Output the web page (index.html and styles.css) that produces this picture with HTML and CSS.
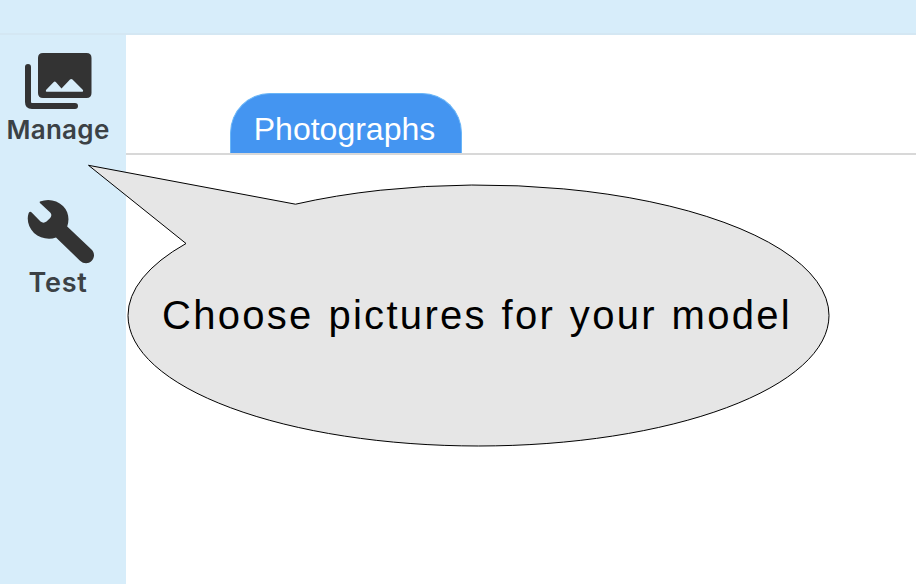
FILE: index.html
```html
<!DOCTYPE html>
<html lang="en">
<head>
<meta charset="utf-8">
<title>Manage pictures</title>
<link rel="stylesheet" href="styles.css">
</head>
<body>
<header class="topbar"></header>
<div class="layout">
  <nav class="sidebar">
    <a class="nav-item manage">
      <svg width="70" height="58" viewBox="23 51 70 58">
        <path class="ink" fill-rule="evenodd" d="M43 53H86.500Q91.500 53 91.500 58V93Q91.500 98 86.500 98H43Q38 98 38 93V58Q38 53 43 53ZM46.500 91.800H82.500Q83.500 91.400 83 90L72.500 79.500Q71.200 78.300 70 79.500L61.500 88.500L56 82.200Q54.800 81 53.500 82.200L46 90Q45.400 91.400 46.500 91.800Z"/>
        <path class="rail" d="M28 67V102Q28 106 32 106H75"/>
      </svg>
      <span class="label">Manage</span>
    </a>
    <a class="nav-item test">
      <svg width="70" height="66" viewBox="26 199 70 66">
        <path class="ink" d="M40 201.500C48 198.500 57 200 63 206C69 212 69.500 220 67.200 226.500L91.500 249.500C95 253 94.700 258 91.500 261C88.500 264 83.500 264 80 260.700L56 237.500C49 240 40 238.500 34 233C28 227 26.500 219 28.700 213Q30 211 31.700 212.500L40.500 221.500Q43.500 223.800 46.500 221.500L50.200 218Q52.500 214.800 50.200 212.500L40.500 203.500Q39.200 202.300 40 201.500Z"/>
      </svg>
      <span class="label">Test</span>
    </a>
  </nav>
  <main class="content">
    <div class="tabs"><div class="tab"><span>Photographs</span></div></div>
  </main>
</div>
<aside class="callout">
  <svg class="bubble" width="916" height="584" viewBox="0 0 916 584">
    <path d="M88.500 165.300L295.500 204.200A350.500 130.500 0 0 1 829 315.500A350.500 130.500 0 0 1 128 315.500A350.500 130.500 0 0 1 186 243.500Z"/>
  </svg>
  <p class="message">Choose pictures for your model</p>
</aside>
</body>
</html>
```
FILE: styles.css
```css
* { box-sizing: border-box; }
body {
  margin: 0;
  height: 584px;
  overflow: hidden;
  background: #fff;
  font-family: "Liberation Sans", Arial, sans-serif;
  position: relative;
}
.topbar {
  height: 35px;
  background: #d7edfa;
  border-bottom: 2px solid #d4e7f3;
}
.layout { display: flex; height: 549px; }
.sidebar {
  width: 126px;
  background: #d7edfa;
  padding-top: 16px;
}
.nav-item {
  display: flex;
  flex-direction: column;
  align-items: center;
  width: 116px;
}
.test { margin-top: 54px; width: 122px; }
.nav-item svg { display: block; }
.label {
  height: 36px;
  font: 600 26px/41px Inter, sans-serif;
  letter-spacing: 0.3px;
  color: #3b4145;
  white-space: nowrap;
}
.test .label {
  width: 116px;
  margin-right: 6px;
  text-align: center;
  font-size: 27px;
  letter-spacing: 0.8px;
  line-height: 36px;
}
.ink { fill: #333; }
.rail {
  fill: none;
  stroke: #333;
  stroke-width: 6;
  stroke-linecap: round;
  stroke-linejoin: round;
}
.content { flex: 1; padding-top: 58px; }
.tabs {
  height: 62px;
  padding-left: 104px;
  border-bottom: 2px solid #d8d8d8;
}
.tab {
  width: 232px;
  height: 60px;
  border-radius: 40px 40px 0 0;
  background: #4495f1;
  border: 1px solid #69b5f7;
  border-bottom: 0;
  color: #fff;
  text-align: center;
  font-size: 32px;
  line-height: 71px;
}
.tab span { margin-right: 3px; }
.callout { position: absolute; inset: 0; }
.bubble { display: block; }
.bubble path { fill: #e6e6e6; stroke: #000; stroke-width: 1; }
.message {
  position: absolute;
  left: 162px;
  top: 290px;
  margin: 0;
  font-size: 40px;
  line-height: 50px;
  letter-spacing: 2.3px;
  word-spacing: 1.3px;
  white-space: nowrap;
  color: #000;
}
```
